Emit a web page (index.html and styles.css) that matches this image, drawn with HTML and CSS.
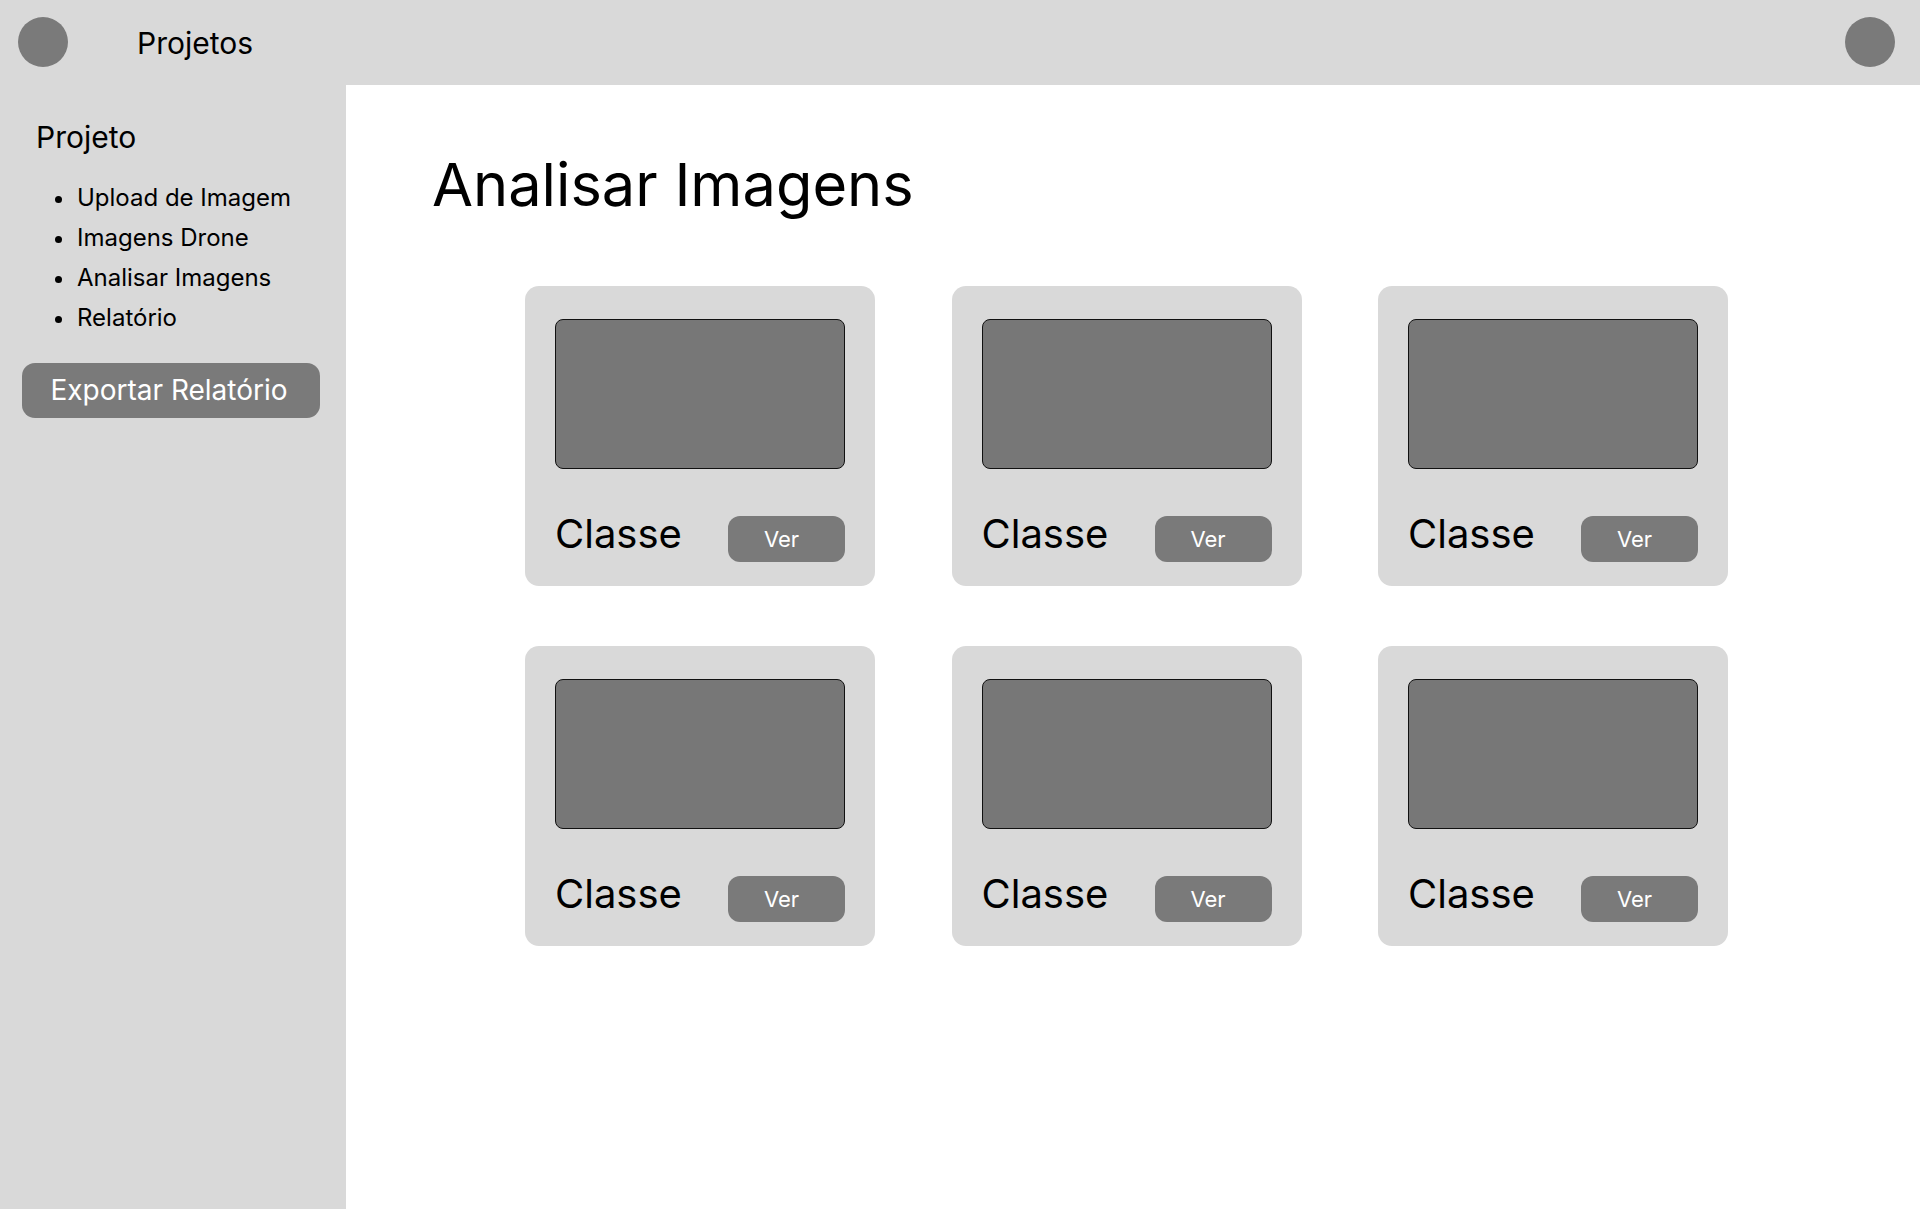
FILE: index.html
```html
<!DOCTYPE html>
<html lang="pt">
<head>
<meta charset="utf-8">
<title>Analisar Imagens</title>
<link rel="stylesheet" href="styles.css">
</head>
<body>
<header class="topbar">
  <div class="avatar"></div>
  <div class="topbar-title">Projetos</div>
  <div class="spacer"></div>
  <div class="avatar"></div>
</header>
<div class="layout">
  <aside class="sidebar">
    <div class="side-title">Projeto</div>
    <ul class="side-list">
      <li>Upload de Imagem</li>
      <li>Imagens Drone</li>
      <li>Analisar Imagens</li>
      <li>Relatório</li>
    </ul>
    <button class="export-btn">Exportar Relatório</button>
  </aside>
  <main class="main">
    <h1 class="page-title">Analisar Imagens</h1>
    <div class="grid">
      <div class="card"><div class="thumb"></div><div class="card-row"><span class="label">Classe</span><button class="ver">Ver</button></div></div>
      <div class="card"><div class="thumb"></div><div class="card-row"><span class="label">Classe</span><button class="ver">Ver</button></div></div>
      <div class="card"><div class="thumb"></div><div class="card-row"><span class="label">Classe</span><button class="ver">Ver</button></div></div>
      <div class="card"><div class="thumb"></div><div class="card-row"><span class="label">Classe</span><button class="ver">Ver</button></div></div>
      <div class="card"><div class="thumb"></div><div class="card-row"><span class="label">Classe</span><button class="ver">Ver</button></div></div>
      <div class="card"><div class="thumb"></div><div class="card-row"><span class="label">Classe</span><button class="ver">Ver</button></div></div>
    </div>
  </main>
</div>
</body>
</html>
```

FILE: styles.css
```css
* { box-sizing: border-box; }
html, body {
  margin: 0;
  padding: 0;
  height: 100%;
}
body {
  font-family: Inter, "Noto Sans", sans-serif;
  color: #000;
  background: #fff;
  display: flex;
  flex-direction: column;
  overflow: hidden;
}
.topbar {
  height: 85px;
  flex: 0 0 85px;
  background: #d9d9d9;
  display: flex;
  align-items: center;
  padding: 0 25px 0 18px;
}
.avatar {
  width: 50px;
  height: 50px;
  border-radius: 50%;
  background: #7a7a7a;
  flex: 0 0 50px;
  margin-top: -1px;
}
.topbar-title {
  font-size: 30px;
  line-height: 36px;
  margin-left: 69px;
}
.spacer { flex: 1; }
.layout {
  flex: 1;
  display: flex;
  min-height: 0;
}
.sidebar {
  width: 346px;
  flex: 0 0 346px;
  background: #d9d9d9;
  padding: 34px 0 0 22px;
}
.side-title {
  font-size: 30px;
  line-height: 36px;
  padding-left: 14px;
}
.side-list {
  list-style: none;
  margin: 23px 0 0 0;
  padding: 0 0 0 33px;
}
.side-list li {
  font-size: 24px;
  line-height: 40px;
  height: 40px;
  display: flex;
  align-items: center;
}
.side-list li::before {
  content: "";
  width: 7px;
  height: 7px;
  border-radius: 50%;
  background: #000;
  margin-right: 15px;
  flex: 0 0 7px;
  margin-top: 2px;
}
.export-btn {
  margin-top: 25px;
  width: 298px;
  height: 55px;
  border: none;
  border-radius: 13px;
  background: #7a7a7a;
  color: #fff;
  font-family: Inter, "Noto Sans", sans-serif;
  font-size: 28px;
  line-height: 34px;
  padding: 0 4px 2px 0;
  display: block;
}
.main {
  flex: 1;
  padding: 63px 0 0 86px;
}
.page-title {
  margin: 0;
  font-size: 59.5px;
  font-weight: 400;
  line-height: 73px;
}
.grid {
  margin: 65px 0 0 93px;
  display: grid;
  grid-template-columns: repeat(3, 350px);
  column-gap: 76.5px;
  row-gap: 60px;
}
.card {
  width: 350px;
  height: 300px;
  background: #d9d9d9;
  border-radius: 14px;
  padding: 33px 30px 0 30px;
}
.thumb {
  width: 290px;
  height: 150px;
  background: #777;
  border: 1px solid #111;
  border-radius: 8px;
}
.card-row {
  margin-top: 47px;
  height: 46px;
  display: flex;
  align-items: center;
  justify-content: space-between;
}
.label {
  font-size: 40px;
  line-height: 48px;
  padding-bottom: 10px;
  padding-left: 0;
}
.ver {
  width: 117px;
  height: 46px;
  border: none;
  border-radius: 12px;
  background: #7a7a7a;
  color: #fff;
  font-family: Inter, "Noto Sans", sans-serif;
  font-size: 22px;
  padding: 0 10px 0 0;
}
```
